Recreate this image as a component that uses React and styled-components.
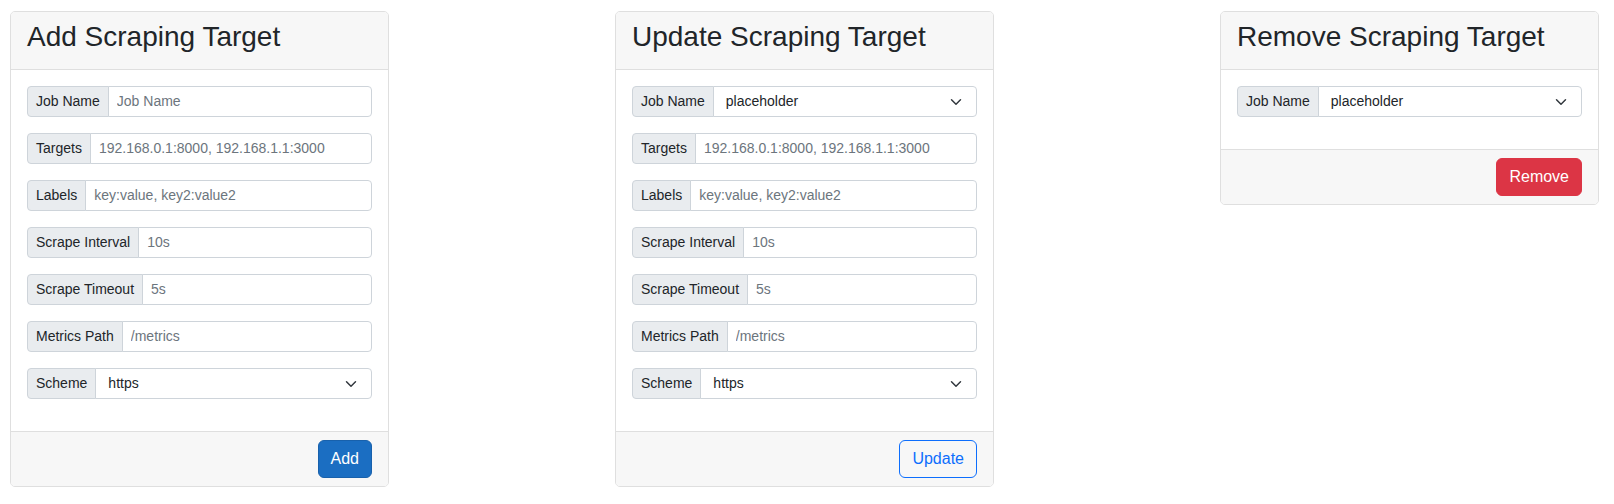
import React from 'react';
import styled, { createGlobalStyle } from 'styled-components';

const GlobalStyle = createGlobalStyle`
  html, body {
    margin: 0;
    padding: 0;
    background: #fff;
    font-family: 'Liberation Sans', Arial, Helvetica, sans-serif;
    color: #212529;
  }
  * { box-sizing: border-box; }
`;

const ChevronDown = () => (
  <svg width="16" height="12" viewBox="0 0 16 16" fill="none" stroke="#343a40"
    strokeWidth="2" strokeLinecap="round" strokeLinejoin="round">
    <path d="M2 5l6 6 6-6" />
  </svg>
);

export default function App() {
  return (
    <>
      <GlobalStyle />
      <Page>
        <Card>
          <CardHeader>
            <Title>Add Scraping Target</Title>
          </CardHeader>
          <CardBody>
            <Field label="Job Name" placeholder="Job Name" />
            <Field label="Targets" placeholder="192.168.0.1:8000, 192.168.1.1:3000" />
            <Field label="Labels" placeholder="key:value, key2:value2" />
            <Field label="Scrape Interval" placeholder="10s" />
            <Field label="Scrape Timeout" placeholder="5s" />
            <Field label="Metrics Path" placeholder="/metrics" />
            <SelectField label="Scheme" value="https" />
          </CardBody>
          <CardFooter>
            <Button $variant="primary">Add</Button>
          </CardFooter>
        </Card>

        <Card>
          <CardHeader>
            <Title>Update Scraping Target</Title>
          </CardHeader>
          <CardBody>
            <SelectField label="Job Name" value="placeholder" />
            <Field label="Targets" placeholder="192.168.0.1:8000, 192.168.1.1:3000" />
            <Field label="Labels" placeholder="key:value, key2:value2" />
            <Field label="Scrape Interval" placeholder="10s" />
            <Field label="Scrape Timeout" placeholder="5s" />
            <Field label="Metrics Path" placeholder="/metrics" />
            <SelectField label="Scheme" value="https" />
          </CardBody>
          <CardFooter>
            <Button $variant="outline">Update</Button>
          </CardFooter>
        </Card>

        <Card>
          <CardHeader>
            <Title>Remove Scraping Target</Title>
          </CardHeader>
          <CardBody>
            <SelectField label="Job Name" value="placeholder" />
          </CardBody>
          <CardFooter>
            <Button $variant="danger">Remove</Button>
          </CardFooter>
        </Card>
      </Page>
    </>
  );
}

function Field({ label, placeholder }) {
  return (
    <InputGroup>
      <Addon>{label}</Addon>
      <TextInput type="text" placeholder={placeholder} />
    </InputGroup>
  );
}

function SelectField({ label, value }) {
  return (
    <InputGroup>
      <Addon>{label}</Addon>
      <SelectBox>
        <SelectText>{value}</SelectText>
        <ChevronDown />
      </SelectBox>
    </InputGroup>
  );
}

const Page = styled.main`
  display: flex;
  justify-content: space-between;
  align-items: flex-start;
  padding: 11px 15px 0 10px;
`;

const Card = styled.section`
  width: 379px;
  background: #fff;
  border: 1px solid #dfdfdf;
  border-radius: 5px;
  overflow: hidden;
`;

const CardHeader = styled.header`
  padding: 8px 16px;
  background: #f7f7f7;
  border-bottom: 1px solid #dfdfdf;
`;

const Title = styled.h3`
  margin: 0 0 8px;
  font-size: 28px;
  font-weight: 400;
  line-height: 33px;
  color: #212529;
`;

const CardBody = styled.div`
  padding: 16px;
`;

const CardFooter = styled.footer`
  display: flex;
  justify-content: flex-end;
  padding: 8px 16px;
  background: #f7f7f7;
  border-top: 1px solid #dfdfdf;
`;

const InputGroup = styled.div`
  display: flex;
  height: 31px;
  margin-bottom: 16px;
  font-size: 14px;
  line-height: 1.5;
`;

const Addon = styled.span`
  display: flex;
  align-items: center;
  padding: 4px 8px;
  background: #e9ecef;
  border: 1px solid #ced4da;
  border-radius: 4px 0 0 4px;
  color: #212529;
  white-space: nowrap;
`;

const TextInput = styled.input`
  flex: 1;
  min-width: 0;
  padding: 4px 8px;
  margin-left: -1px;
  border: 1px solid #ced4da;
  border-radius: 0 4px 4px 0;
  font-family: inherit;
  font-size: 14px;
  line-height: 1.5;
  color: #212529;
  background: #fff;
  outline: none;

  &::placeholder {
    color: #6c757d;
    opacity: 1;
  }
`;

const SelectBox = styled.div`
  flex: 1;
  display: flex;
  align-items: center;
  justify-content: space-between;
  margin-left: -1px;
  padding: 4px 12px;
  border: 1px solid #ced4da;
  border-radius: 0 4px 4px 0;
  background: #fff;
`;

const SelectText = styled.span`
  color: #212529;
`;

const buttonColors = {
  primary: { bg: '#1b6ec2', border: '#1861ac', color: '#fff' },
  danger: { bg: '#dc3545', border: '#dc3545', color: '#fff' },
  outline: { bg: 'transparent', border: '#0d6efd', color: '#0d6efd' },
};

const Button = styled.button`
  padding: 6px 12px;
  font-family: inherit;
  font-size: 16px;
  line-height: 1.5;
  border-radius: 6px;
  border: 1px solid ${(p) => buttonColors[p.$variant].border};
  background: ${(p) => buttonColors[p.$variant].bg};
  color: ${(p) => buttonColors[p.$variant].color};
  cursor: pointer;
`;
